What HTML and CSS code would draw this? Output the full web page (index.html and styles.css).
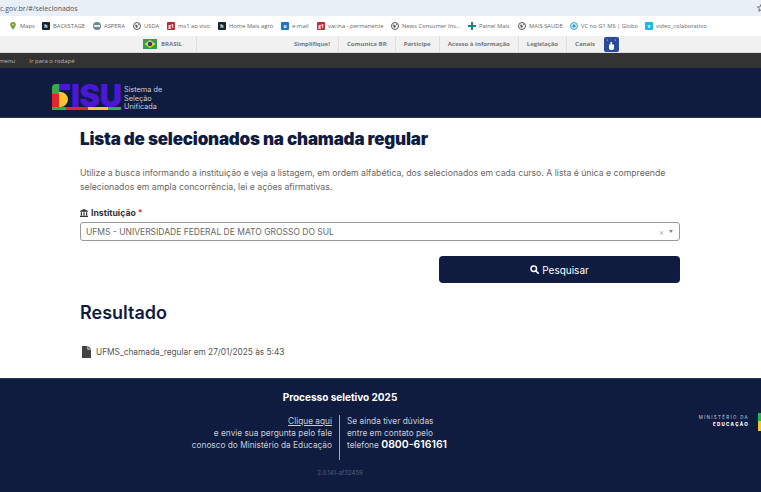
FILE: index.html
```html
<!DOCTYPE html>
<html lang="pt-BR">
<head>
    <meta charset="UTF-8">
    <meta name="viewport" content="width=device-width, initial-scale=1.0">
    <title>Lista de selecionados - SISU</title>
    <link rel="stylesheet" href="styles.css">
</head>
<body>

    <!-- Browser address bar -->
    <div class="address-bar">
        <span class="url">c.gov.br/#/selecionados</span>
        <svg class="star" viewBox="0 0 8 8"><path d="M4 .5l1 2.400 2.500.2-1.900 1.600.6 2.500L4 5.900 1.800 7.200l.6-2.500L.5 3.100 3 2.900z" fill="none" stroke="#555" stroke-width=".8"/></svg>
    </div>

    <!-- Bookmarks -->
    <div class="bookmarks">
        <a class="bookmark maps"><svg class="bm-icon" viewBox="0 0 8 8"><path d="M4 0C2.200 0 1.200 1.200 1.200 2.800 1.200 4.600 3.200 6 4 8 4.800 6 6.800 4.600 6.800 2.800 6.800 1.200 5.800 0 4 0z" fill="#5f9e4a"/><circle cx="4" cy="2.800" r="1.200" fill="#f2c230"/></svg>Maps</a>
        <a class="bookmark backstage"><span class="bm-icon square dark">h</span>BACKSTAGE</a>
        <a class="bookmark aspera"><svg class="bm-icon" viewBox="0 0 8 8"><circle cx="4" cy="4" r="4" fill="#6f8796"/><rect x="1" y="3" width="6" height="2" fill="#dfe6ea"/></svg>ASPERA</a>
        <a class="bookmark usda"><svg class="bm-icon" viewBox="0 0 8 8"><circle cx="4" cy="4" r="3.500" fill="#fff" stroke="#555" stroke-width="1"/><path d="M2 2.500l2 .5 1 2-2 1zM5 1.500l1.500 1-1 1z" fill="#555"/></svg>USDA</a>
        <a class="bookmark ms1"><span class="bm-icon square red">g1</span>ms1 ao vivo</a>
        <a class="bookmark agro"><span class="bm-icon square dark">h</span>Home Mais agro</a>
        <a class="bookmark email"><span class="bm-icon square blue">o</span>e-mail</a>
        <a class="bookmark vacina"><span class="bm-icon square red">g1</span>vacina - permanente</a>
        <a class="bookmark news"><svg class="bm-icon" viewBox="0 0 8 8"><circle cx="4" cy="4" r="3.500" fill="#fff" stroke="#555" stroke-width="1"/><path d="M2 2.500l2 .5 1 2-2 1zM5 1.500l1.500 1-1 1z" fill="#555"/></svg>News Consumer Ins...</a>
        <a class="bookmark painel"><svg class="bm-icon" viewBox="0 0 8 8"><path d="M3 0h2v3h3v2H5v3H3V5H0V3h3z" fill="#0f8a8a"/></svg>Painel Mais</a>
        <a class="bookmark saude"><svg class="bm-icon" viewBox="0 0 8 8"><circle cx="4" cy="4" r="3.500" fill="#fff" stroke="#555" stroke-width="1"/><path d="M2 2.500l2 .5 1 2-2 1zM5 1.500l1.500 1-1 1z" fill="#555"/></svg>MAIS SAUDE</a>
        <a class="bookmark vc"><svg class="bm-icon" viewBox="0 0 8 8"><circle cx="4" cy="4" r="3.400" fill="none" stroke="#1c9bc4" stroke-width="1"/><rect x="2.500" y="2.500" width="3" height="3" fill="#1c9bc4"/></svg>VC no G1 MS | Globo</a>
        <a class="bookmark video"><span class="bm-icon square cyan">v</span>video_colaborativo</a>
    </div>

    <!-- Barra do governo -->
    <div class="gov-bar">
        <div class="gov-brand">
            <svg class="flag" viewBox="0 0 14 10"><rect width="14" height="10" fill="#2f9e4f"/><path d="M7 1l5.500 4L7 9 1.500 5z" fill="#f2d22e"/><circle cx="7" cy="5" r="2.200" fill="#24408e"/></svg>
            <span>BRASIL</span>
        </div>
        <nav class="gov-links">
            <a>Simplifique!</a>
            <a>Comunica BR</a>
            <a>Participe</a>
            <a>Acesso à informação</a>
            <a>Legislação</a>
            <a>Canais</a>
            <span class="gov-hand">
                <svg viewBox="0 0 15 15"><path d="M5 7.500h5v3.500a2 2 0 0 1-2 2H7a2 2 0 0 1-2-2z" fill="#fff"/><rect x="6.500" y="5" width="1.500" height="3" fill="#fff"/><circle cx="3.500" cy="3" r=".6" fill="#cfd8f0"/><circle cx="11.500" cy="3" r=".6" fill="#cfd8f0"/></svg>
            </span>
        </nav>
    </div>

    <!-- Skip links -->
    <div class="skip-bar">
        <a class="skip-menu">menu</a>
        <a>Ir para o rodapé</a>
    </div>

    <!-- Header -->
    <header class="site-header">
        <div class="logo">
            <svg class="logo-s" viewBox="0 0 19 23">
                <path d="M4 0h3.500v10H0V4a4 4 0 0 1 4-4z" fill="#2fae4a"/>
                <path d="M7.500 0H18v6H7.500z" fill="#4a17d6"/>
                <rect x="0" y="10" width="7" height="13" fill="#e3262e"/>
                <path d="M7 8h1.500a7.500 7.500 0 0 1 0 15H7z" fill="#f7c52d"/>
            </svg>
            <span class="logo-word">ISU</span>
            <span class="logo-line"></span>
            <p class="logo-text">Sistema de<br>Seleção<br>Unificada</p>
        </div>
    </header>

    <!-- Main Content -->
    <main class="container">
        <h1>Lista de selecionados na chamada regular</h1>
        <p class="intro">Utilize a busca informando a instituição e veja a listagem, em ordem alfabética, dos selecionados em cada curso. A lista é única e compreende selecionados em ampla concorrência, lei e ações afirmativas.</p>

        <label class="field-label">
            <svg viewBox="0 0 10 10"><path d="M5 0l5 2.500V3.500H0V2.500zM1 4.200h1.500V8H1zM4.200 4.200h1.600V8H4.200zM7.500 4.200H9V8H7.500zM0 8.500h10V10H0z" fill="#333"/></svg>
            Instituição <span class="required">*</span>
        </label>
        <div class="select-box">
            <span>UFMS - UNIVERSIDADE FEDERAL DE MATO GROSSO DO SUL</span>
            <span class="select-clear">×</span>
            <span class="select-arrow"></span>
        </div>

        <div class="btn-container">
            <button class="search-btn">
                <svg viewBox="0 0 12 12"><circle cx="5" cy="5" r="3.700" fill="none" stroke="#fff" stroke-width="1.900"/><path d="M7.800 7.800l3.200 3.200" stroke="#fff" stroke-width="2.200" stroke-linecap="round"/></svg>
                Pesquisar
            </button>
        </div>

        <h2>Resultado</h2>
        <a class="file-link">
            <svg viewBox="0 0 9 12"><path d="M0 0h5.500v3.500H9V12H0zM6.300 0L9 2.700H6.300z" fill="#444"/></svg>
            UFMS_chamada_regular em 27/01/2025 às 5:43
        </a>
    </main>

    <!-- Footer -->
    <footer class="site-footer">
        <div class="footer-main">
            <h3>Processo seletivo 2025</h3>
            <div class="footer-cols">
                <p class="footer-left"><a>Clique aqui</a><br>e envie sua pergunta pelo fale<br>conosco do Ministério da Educação</p>
                <p class="footer-right">Se ainda tiver dúvidas<br>entre em contato pelo<br>telefone <strong>0800-616161</strong></p>
            </div>
            <p class="version">2.0.141-af32459</p>
        </div>
        <div class="footer-logo">
            <p>MINISTÉRIO DA<br><strong>EDUCAÇÃO</strong></p>
            <span class="mec-flag"></span>
        </div>
    </footer>

</body>
</html>
```

FILE: styles.css
```css
body {
    font-family: 'Inter', 'Liberation Sans', sans-serif;
    margin: 0;
    padding: 0;
    height: 492px;
    overflow: hidden;
    background-color: #fff;
    color: #333;
}

a {
    color: inherit;
}

/* Browser chrome */
.address-bar {
    height: 16px;
    background-color: #e9eff7;
    display: flex;
    justify-content: space-between;
    align-items: center;
    font-family: 'Open Sans', sans-serif;
    font-size: 7px;
    color: #555;
}

.star {
    width: 8px;
    height: 8px;
    margin-right: -4px;
}

.bookmarks {
    height: 20px;
    display: flex;
    align-items: center;
    padding-left: 9px;
    font-family: 'Open Sans', sans-serif;
    font-size: 5.800px;
    color: #666;
    background-color: #fff;
    white-space: nowrap;
}

.bookmark {
    display: flex;
    align-items: center;
    gap: 3px;
}

.bm-icon {
    width: 8px;
    height: 8px;
    flex: none;
}

.maps { width: 33px; }
.backstage { width: 51px; }
.aspera { width: 40px; }
.usda { width: 34px; }
.ms1 { width: 51px; }
.agro { width: 63px; }
.email { width: 36px; }
.vacina { width: 74px; }
.news { width: 77px; }
.painel { width: 50px; }
.saude { width: 52px; }
.vc { width: 75px; }

.square {
    border-radius: 1px;
    color: #fff;
    font-size: 5px;
    font-weight: bold;
    line-height: 8px;
    text-align: center;
}

.dark { background-color: #222; }
.red { background-color: #c4262e; }
.blue { background-color: #1a78c2; }
.cyan { background-color: #1ab7ea; }

/* Gov bar */
.gov-bar {
    height: 17px;
    background-color: #f1f1f1;
    border-bottom: 1px solid #ddd;
    box-sizing: border-box;
    display: flex;
    align-items: center;
    font-family: 'Open Sans', sans-serif;
    font-size: 6.050px;
    font-weight: 700;
    color: #777;
    white-space: nowrap;
}

.gov-brand {
    display: flex;
    align-items: center;
    gap: 4px;
    margin-left: 143px;
    width: 53px;
    height: 100%;
    border-right: 1px solid #dfdfdf;
}

.flag {
    width: 14px;
    height: 10px;
}

.gov-links {
    display: flex;
    align-items: center;
    height: 100%;
    margin-left: 89px;
}

.gov-links a {
    padding: 0 8px;
    display: flex;
    align-items: center;
    height: 100%;
    border-right: 1px solid #dfdfdf;
}

.gov-links a:nth-child(6) {
    border-right: none;
}

.gov-hand {
    width: 15px;
    height: 15px;
    margin-left: 1px;
    background-color: #2c4a9a;
    border-radius: 2px;
}

.gov-hand svg {
    display: block;
}

.skip-bar {
    height: 15px;
    background-color: #333;
    display: flex;
    align-items: center;
    gap: 14px;
    font-size: 6px;
    color: #bbb;
    font-family: 'Open Sans', sans-serif;
}

.skip-menu {
    margin-left: -1px;
}

/* Header */
.site-header {
    height: 50px;
    background-color: #0f1c3f;
    border-bottom: 1px solid #2b3a5c;
    box-sizing: border-box;
    padding: 16px 0 0 52px;
}

.logo {
    display: flex;
    position: relative;
    align-items: flex-start;
    height: 26px;
}

.logo-s {
    width: 19px;
    height: 23px;
    flex: none;
}

.logo-word {
    font-family: 'Inter', sans-serif;
    font-size: 31px;
    font-weight: 900;
    line-height: 23px;
    color: #4a17d6;
    letter-spacing: -0.5px;
    width: 50px;
}

.logo-line {
    position: absolute;
    left: 0;
    top: 23px;
    width: 69px;
    height: 3px;
    background: linear-gradient(to right, #2fae4a 0 20%, #e3262e 20% 52%, #f7c52d 52% 81%, #2fae4a 81%);
}

.logo-text {
    margin: 2px 0 0 3px;
    font-size: 7.300px;
    line-height: 8.500px;
    color: #c9ced8;
}

/* Main */
.container {
    height: 260px;
    box-sizing: border-box;
    padding: 11px 81px 0 80px;
}

h1 {
    margin: 0;
    font-size: 17px;
    line-height: 20px;
    font-weight: 900;
    letter-spacing: -0.2px;
    color: #0f1c3f;
}

.intro {
    margin: 17px 0 0;
    font-size: 8.700px;
    line-height: 14px;
    color: #666;
}

.field-label {
    display: flex;
    align-items: center;
    gap: 3px;
    margin-top: 14px;
    font-size: 8.700px;
    font-weight: 700;
    color: #333;
}

.field-label svg {
    width: 8px;
    height: 8px;
}

.required {
    color: #d33;
    margin-left: -1px;
}

.select-box {
    height: 19px;
    margin-top: 4px;
    box-sizing: border-box;
    border: 1px solid #999;
    border-radius: 3px;
    display: flex;
    align-items: center;
    padding: 0 6px 0 5px;
    font-size: 8.500px;
    color: #666;
}

.select-clear {
    margin-left: auto;
    color: #aaa;
    font-size: 8px;
}

.select-arrow {
    margin-left: 5px;
    border-left: 2.500px solid transparent;
    border-right: 2.500px solid transparent;
    border-top: 3px solid #888;
}

.btn-container {
    display: flex;
    justify-content: flex-end;
    margin-top: 15px;
}

.search-btn {
    width: 241px;
    height: 27px;
    background-color: #0f1c3f;
    color: #fff;
    border: none;
    border-radius: 4px;
    font-family: inherit;
    font-size: 10px;
    display: flex;
    align-items: center;
    justify-content: center;
    gap: 3px;
}

.search-btn svg {
    width: 9px;
    height: 9px;
}

h2 {
    margin: 20px 0 0;
    font-size: 18px;
    line-height: 20px;
    font-weight: 600;
    color: #0f1c3f;
}

.file-link {
    display: flex;
    align-items: center;
    gap: 5px;
    margin: 23px 0 0 2px;
    font-size: 8.300px;
    color: #555;
}

.file-link svg {
    width: 9px;
    height: 12px;
}

/* Footer */
.site-footer {
    height: 114px;
    background-color: #0f1c3f;
    border-top: 1px solid #2b3a5c;
    box-sizing: border-box;
    display: flex;
    color: #c9ced8;
}

.footer-main {
    width: 680px;
    text-align: center;
}

.site-footer h3 {
    margin: 12px 0 0;
    font-size: 10px;
    line-height: 12px;
    font-weight: 700;
    color: #fff;
}

.footer-cols {
    display: flex;
    justify-content: center;
    margin-top: 12px;
    font-size: 8.300px;
    line-height: 12px;
}

.footer-cols p {
    margin: 0;
    width: 340px;
    height: 45px;
    box-sizing: border-box;
}

.footer-left {
    text-align: right;
    padding-right: 7px;
    border-right: 1px solid #aab;
}

.footer-left a {
    text-decoration: underline;
}

.footer-right {
    text-align: left;
    padding-left: 7px;
}

.footer-right strong {
    font-size: 10.500px;
    font-weight: 600;
    color: #fff;
}

.version {
    margin: 9px 0 0;
    font-size: 6px;
    color: #555f78;
}

.footer-logo {
    position: relative;
    flex: 1;
    padding-top: 35px;
    font-size: 4.500px;
    line-height: 7px;
    letter-spacing: 1.300px;
    text-align: right;
    color: #c9ced8;
}

.footer-logo p {
    margin: 0 12px 0 0;
}

.footer-logo strong {
    color: #fff;
    font-weight: 800;
}

.mec-flag {
    position: absolute;
    right: 0;
    top: 34px;
    width: 3px;
    height: 18px;
    background: linear-gradient(to bottom, #2fae4a 0 45%, #f7c52d 45%);
}
```
